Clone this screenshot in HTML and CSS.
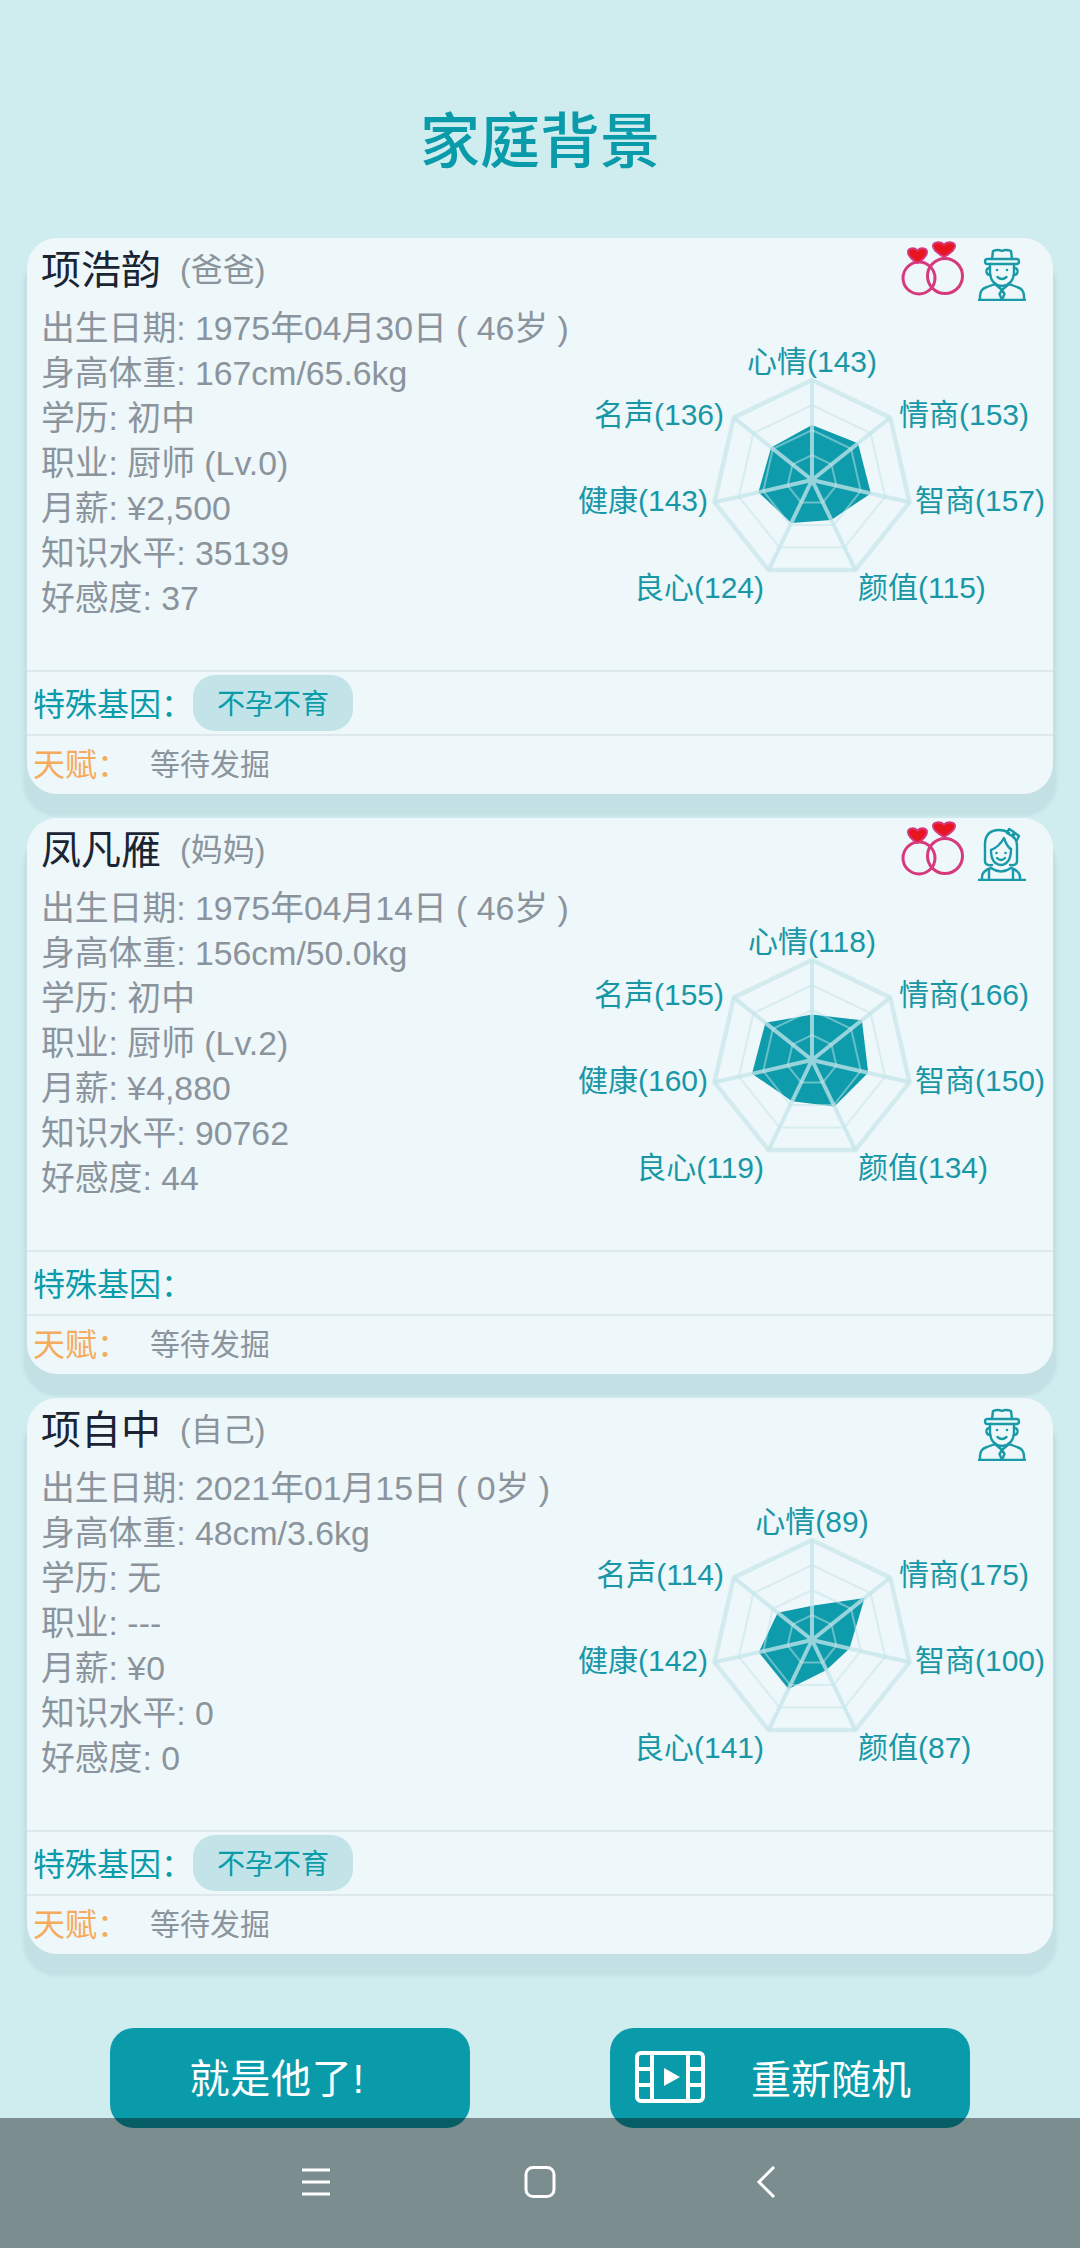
FILE: index.html
```html
<!DOCTYPE html>
<html lang="zh-CN">
<head>
    <meta charset="UTF-8">
    <meta name="viewport" content="width=device-width, initial-scale=1.0">
    <title>家庭背景</title>
    <link rel="stylesheet" href="styles.css">
</head>
<body>
    <!-- shared icons -->
    <svg class="sprites" aria-hidden="true">
        <symbol id="icon-rings" viewBox="0 0 66 60">
            <circle class="ring" cx="21" cy="38" r="16"/>
            <circle class="ring" cx="47" cy="36" r="17.500"/>
            <path class="heart" d="M19.500 23 C13 19 10 15 10 12 C10 8 16 7 19.500 10.500 C23 7 29 8 29 12 C29 15 26 19 19.500 23 Z"/>
            <path class="heart" d="M46 17 C39 13 35 9 35 6 C35 2 42 1 46 4.500 C50 1 57 2 57 6 C57 9 53 13 46 17 Z"/>
        </symbol>
        <symbol id="icon-man" viewBox="0 0 48 53">
            <path class="line" d="M14 11 L15 3 Q20 1 24 3 Q28 1 33 3 L34 11"/>
            <rect class="line" x="7" y="11" width="34" height="5" rx="2.500"/>
            <path class="line" d="M12 16 V25 Q13 37 24 38 Q35 37 36 25 V16"/>
            <path class="line" d="M12 20 Q8 20 8.500 24 Q9 27 12 27 M36 20 Q40 20 39.500 24 Q39 27 36 27"/>
            <circle class="dot" cx="19" cy="22" r="1.300"/>
            <circle class="dot" cx="29" cy="22" r="1.300"/>
            <path class="line" d="M19.500 29 Q24 33 28.500 29"/>
            <path class="line" d="M2 52 V48 Q2 41 9 39 L17 36 L24 42 L31 36 L39 39 Q46 41 46 48 V52"/>
            <path class="line" d="M24 42 L21.500 46 L24 52 L26.500 46 Z"/>
            <path class="line" d="M0 52 H48"/>
        </symbol>
        <symbol id="icon-woman" viewBox="0 0 48 53">
            <path class="line" d="M14 37 Q8 38 7 34 V15 Q8 2 21 2 Q27 2 31 5 M37 11 Q39 13 39 18 V34 Q38 38 32 37"/>
            <path class="line" d="M13 22 Q21 19 26 10 Q29 19 33 21"/>
            <path class="line" d="M13 22 Q13 36 23 37 Q33 36 33 21"/>
            <circle class="dot" cx="18.500" cy="25" r="1.300"/>
            <circle class="dot" cx="27.500" cy="25" r="1.300"/>
            <path class="line" d="M19 30 Q23 34 27 30"/>
            <path class="line" d="M4 52 V49 Q4 43 13 40 Q23 47 33 40 Q42 43 42 49 V52"/>
            <path class="line" d="M11 42 V52 M35 42 V52"/>
            <path class="line" d="M31 1 L36 4 L34 8 L29 5 Z M37 5 L41 8 L39 12 L35 9 Z"/>
            <path class="line" d="M0 52 H48"/>
        </symbol>
        <symbol id="radar-grid" viewBox="-240 -140 480 280">
            <polygon class="ring-thin" points="0,-25 19.500,-15.600 24.400,5.600 10.800,22.500 -10.800,22.500 -24.400,5.600 -19.500,-15.600"/>
            <polygon class="ring-thin" points="0,-50 39.100,-31.200 48.700,11.100 21.700,45 -21.700,45 -48.700,11.100 -39.100,-31.200"/>
            <polygon class="ring-thin" points="0,-75 58.600,-46.800 73.100,16.700 32.500,67.600 -32.500,67.600 -73.100,16.700 -58.600,-46.800"/>
            <polygon class="ring-outer" points="0,-100 78.200,-62.400 97.500,22.300 43.400,90.100 -43.400,90.100 -97.500,22.300 -78.200,-62.400"/>
            <path class="spoke" d="M0 0 L0 -100 M0 0 L78.200 -62.400 M0 0 L97.500 22.300 M0 0 L43.400 90.100 M0 0 L-43.400 90.100 M0 0 L-97.500 22.300 M0 0 L-78.200 -62.400"/>
        </symbol>
    </svg>

    <div class="page">
        <h1 class="title">家庭背景</h1>

        <!-- dad -->
        <div class="card">
            <div class="card-head">
                <span class="name">项浩韵</span>
                <span class="relation">(爸爸)</span>
                <div class="head-icons">
                    <svg class="icon-rings"><use href="#icon-rings"/></svg>
                    <svg class="icon-person"><use href="#icon-man"/></svg>
                </div>
            </div>
            <div class="card-body">
                <div class="info">
                    <p>出生日期: 1975年04月30日 ( 46岁 )</p>
                    <p>身高体重: 167cm/65.6kg</p>
                    <p>学历: 初中</p>
                    <p>职业: 厨师 (Lv.0)</p>
                    <p>月薪: ¥2,500</p>
                    <p>知识水平: 35139</p>
                    <p>好感度: 37</p>
                </div>
                <svg class="radar" viewBox="-240 -140 480 280">
                    <polygon class="radar-data" points="0,-55 46,-36.700 58.900,13.400 19.200,39.900 -20.700,43 -53.600,12.200 -40.900,-32.600"/>
                    <use href="#radar-grid" x="-240" y="-140" width="480" height="280"/>
                    <text class="radar-label mid" x="0" y="-108">心情(143)</text>
                    <text class="radar-label" x="87" y="-55">情商(153)</text>
                    <text class="radar-label" x="103" y="31">智商(157)</text>
                    <text class="radar-label" x="46" y="118">颜值(115)</text>
                    <text class="radar-label end" x="-48" y="118">良心(124)</text>
                    <text class="radar-label end" x="-104" y="31">健康(143)</text>
                    <text class="radar-label end" x="-88" y="-55">名声(136)</text>
                </svg>
            </div>
            <div class="gene-row">
                <span class="gene-label">特殊基因：</span>
                <span class="gene-tag">不孕不育</span>
            </div>
            <div class="talent-row">
                <span class="talent-label">天赋：</span>
                <span class="talent-value">等待发掘</span>
            </div>
        </div>

        <!-- mum -->
        <div class="card">
            <div class="card-head">
                <span class="name">凤凡雁</span>
                <span class="relation">(妈妈)</span>
                <div class="head-icons">
                    <svg class="icon-rings"><use href="#icon-rings"/></svg>
                    <svg class="icon-person"><use href="#icon-woman"/></svg>
                </div>
            </div>
            <div class="card-body">
                <div class="info">
                    <p>出生日期: 1975年04月14日 ( 46岁 )</p>
                    <p>身高体重: 156cm/50.0kg</p>
                    <p>学历: 初中</p>
                    <p>职业: 厨师 (Lv.2)</p>
                    <p>月薪: ¥4,880</p>
                    <p>知识水平: 90762</p>
                    <p>好感度: 44</p>
                </div>
                <svg class="radar" viewBox="-240 -140 480 280">
                    <polygon class="radar-data" points="0,-45.400 49.900,-39.800 56.200,12.800 22.400,46.400 -19.900,41.200 -60,13.700 -46.600,-37.200"/>
                    <use href="#radar-grid" x="-240" y="-140" width="480" height="280"/>
                    <text class="radar-label mid" x="0" y="-108">心情(118)</text>
                    <text class="radar-label" x="87" y="-55">情商(166)</text>
                    <text class="radar-label" x="103" y="31">智商(150)</text>
                    <text class="radar-label" x="46" y="118">颜值(134)</text>
                    <text class="radar-label end" x="-48" y="118">良心(119)</text>
                    <text class="radar-label end" x="-104" y="31">健康(160)</text>
                    <text class="radar-label end" x="-88" y="-55">名声(155)</text>
                </svg>
            </div>
            <div class="gene-row">
                <span class="gene-label">特殊基因：</span>
            </div>
            <div class="talent-row">
                <span class="talent-label">天赋：</span>
                <span class="talent-value">等待发掘</span>
            </div>
        </div>

        <!-- self -->
        <div class="card">
            <div class="card-head">
                <span class="name">项自中</span>
                <span class="relation">(自己)</span>
                <div class="head-icons">
                    <svg class="icon-person"><use href="#icon-man"/></svg>
                </div>
            </div>
            <div class="card-body">
                <div class="info">
                    <p>出生日期: 2021年01月15日 ( 0岁 )</p>
                    <p>身高体重: 48cm/3.6kg</p>
                    <p>学历: 无</p>
                    <p>职业: ---</p>
                    <p>月薪: ¥0</p>
                    <p>知识水平: 0</p>
                    <p>好感度: 0</p>
                </div>
                <svg class="radar" viewBox="-240 -140 480 280">
                    <polygon class="radar-data" points="0,-34.200 52.600,-42 37.500,8.600 14.500,30.100 -23.500,48.900 -53.200,12.200 -34.300,-27.300"/>
                    <use href="#radar-grid" x="-240" y="-140" width="480" height="280"/>
                    <text class="radar-label mid" x="0" y="-108">心情(89)</text>
                    <text class="radar-label" x="87" y="-55">情商(175)</text>
                    <text class="radar-label" x="103" y="31">智商(100)</text>
                    <text class="radar-label" x="46" y="118">颜值(87)</text>
                    <text class="radar-label end" x="-48" y="118">良心(141)</text>
                    <text class="radar-label end" x="-104" y="31">健康(142)</text>
                    <text class="radar-label end" x="-88" y="-55">名声(114)</text>
                </svg>
            </div>
            <div class="gene-row">
                <span class="gene-label">特殊基因：</span>
                <span class="gene-tag">不孕不育</span>
            </div>
            <div class="talent-row">
                <span class="talent-label">天赋：</span>
                <span class="talent-value">等待发掘</span>
            </div>
        </div>

        <div class="actions">
            <button class="action-btn pick">就是他了!</button>
            <button class="action-btn reroll">
                <svg class="film" viewBox="0 0 70 52">
                    <rect x="2" y="2" width="66" height="48" rx="4"/>
                    <path d="M17 2 V50 M53 2 V50 M2 18 H17 M2 34 H17 M53 18 H68 M53 34 H68"/>
                    <polygon class="film-play" points="29,17 45,26 29,35"/>
                </svg>
                <span>重新随机</span>
            </button>
        </div>
    </div>

    <!-- translucent system bar sits over the page -->
    <div class="nav-bar">
        <svg class="nav-icon" viewBox="0 0 32 32"><path d="M4 4 H32 M4 16 H32 M4 28 H32"/></svg>
        <svg class="nav-icon" viewBox="0 0 32 32"><rect x="2" y="1.500" width="28" height="29" rx="7"/></svg>
        <svg class="nav-icon" viewBox="0 0 32 32"><path d="M24 1 L9 16 L24 31"/></svg>
    </div>
</body>
</html>
```

FILE: styles.css
```css
* {
    margin: 0;
    padding: 0;
    box-sizing: border-box;
    font-family: "Liberation Sans", "Noto Sans CJK SC", sans-serif;
}
body {
    position: relative;
    width: 1080px;
    height: 2248px;
    overflow: hidden;
    background: #cfecef;
}
.sprites {
    display: block;
    width: 0;
    height: 0;
}
.page {
    padding: 113px 27px 0;
}
.title {
    height: 60px;
    margin-bottom: 65px;
    font-size: 60px;
    line-height: 60px;
    font-weight: 500;
    text-align: center;
    color: #0a9bab;
}

/* cards */
.card {
    height: 556px;
    margin-bottom: 24px;
    background: #eef7fa;
    border-radius: 30px;
    box-shadow: 0 18px 3px 4px #c3e0e4;
}
.card-head {
    display: flex;
    align-items: flex-start;
    height: 68px;
    padding: 10px 27px 0 14px;
}
.name {
    font-size: 40px;
    line-height: 44px;
    color: #1a2433;
}
.relation {
    margin-left: 19px;
    font-size: 32px;
    line-height: 44px;
    color: #8b949c;
}
.head-icons {
    display: flex;
    align-items: flex-start;
    gap: 14px;
    margin-left: auto;
}
.icon-rings {
    width: 66px;
    height: 60px;
    margin-top: -8px;
}
.icon-person {
    width: 48px;
    height: 53px;
}
.ring {
    fill: none;
    stroke: #d63a7c;
    stroke-width: 3;
}
.heart {
    fill: #e8141f;
    stroke: #d63a7c;
    stroke-width: 2;
}
.line {
    fill: none;
    stroke: #1a9aa8;
    stroke-width: 2.400;
    stroke-linejoin: round;
    stroke-linecap: round;
}
.dot {
    fill: #1a9aa8;
}

.card-body {
    display: flex;
    justify-content: space-between;
    height: 364px;
    padding-left: 14px;
    padding-right: 1px;
}
.info {
    font-size: 33.800px;
    line-height: 45px;
    color: #8b949c;
    white-space: nowrap;
}
.radar {
    flex: none;
    width: 480px;
    height: 280px;
    margin-top: 34px;
}
.radar-data {
    fill: #0e9bab;
}
.ring-thin {
    fill: none;
    stroke: #bfe3e8;
    stroke-width: 2;
    opacity: 0.5;
}
.ring-outer {
    fill: none;
    stroke: #d3ebee;
    stroke-width: 4.500;
}
.spoke {
    fill: none;
    stroke: #c4e5e9;
    stroke-width: 4;
    opacity: 0.75;
}
.radar-label {
    font-size: 30px;
    fill: #1a97a6;
}
.radar-label.mid {
    text-anchor: middle;
}
.radar-label.end {
    text-anchor: end;
}

.gene-row {
    display: flex;
    align-items: center;
    height: 64px;
    padding-left: 6px;
    border-top: 2px solid #dde9ec;
}
.gene-label {
    flex: none;
    width: 160px;
    margin-bottom: 2px;
    font-size: 32px;
    white-space: nowrap;
    color: #0a9bab;
}
.gene-tag {
    width: 160px;
    height: 56px;
    background: #c2e4e8;
    border-radius: 22px;
    font-size: 28px;
    line-height: 60px;
    text-align: center;
    color: #0a9bab;
}
.talent-row {
    display: flex;
    align-items: center;
    height: 60px;
    padding: 0 0 7px 6px;
    border-top: 2px solid #dde9ec;
}
.talent-label {
    flex: none;
    width: 117px;
    font-size: 32px;
    white-space: nowrap;
    color: #f5ab5c;
}
.talent-value {
    font-size: 30px;
    color: #8b949c;
}

/* bottom buttons */
.actions {
    display: flex;
    gap: 140px;
    margin-top: 74px;
    margin-left: 83px;
}
.action-btn {
    display: flex;
    align-items: center;
    justify-content: center;
    flex: none;
    width: 360px;
    height: 100px;
    border: none;
    border-radius: 24px;
    background: #0a9bab;
    font-size: 40px;
    color: #fff;
}
.action-btn.pick {
    padding: 0 26px 4px 0;
    letter-spacing: 0.800px;
}
.action-btn.reroll {
    justify-content: flex-start;
    padding: 0 0 2px 25px;
}
.action-btn.reroll span {
    margin-left: 46px;
}
.film {
    width: 70px;
    height: 52px;
    fill: none;
    stroke: #fff;
    stroke-width: 4;
}
.film-play {
    fill: #fff;
    stroke: none;
}

.nav-bar {
    position: absolute;
    left: 0;
    right: 0;
    bottom: 0;
    display: flex;
    justify-content: center;
    gap: 194px;
    height: 130px;
    padding-top: 48px;
    background: rgba(0, 0, 0, 0.4);
}
.nav-icon {
    width: 32px;
    height: 32px;
    fill: none;
    stroke: #fff;
    stroke-width: 3;
}
```
